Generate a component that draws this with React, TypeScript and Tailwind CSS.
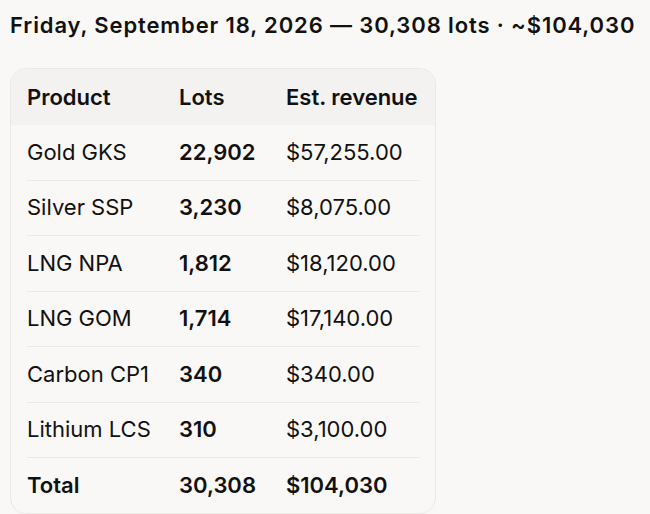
const rows = [
  { product: "Gold GKS", lots: "22,902", revenue: "$57,255.00" },
  { product: "Silver SSP", lots: "3,230", revenue: "$8,075.00" },
  { product: "LNG NPA", lots: "1,812", revenue: "$18,120.00" },
  { product: "LNG GOM", lots: "1,714", revenue: "$17,140.00" },
  { product: "Carbon CP1", lots: "340", revenue: "$340.00" },
  { product: "Lithium LCS", lots: "310", revenue: "$3,100.00" },
];

export default function App() {
  return (
    <div className="min-h-[514px] w-[650px] bg-[#f9f8f6] text-[#111111] font-['Inter',sans-serif]">
      <h1 className="pl-[10px] pt-[10px] text-[22px] leading-[30px] font-semibold tracking-[0.88px]">
        Friday, September 18, 2026 — 30,308 lots · ~$104,030
      </h1>
      <div className="ml-[10px] mt-[28px] w-[426px] overflow-hidden rounded-[16px] border border-[#ebe9e6] bg-[#f9f8f6] text-[22px]">
        <div className="grid h-[56px] grid-cols-[152px_107px_1fr] items-center bg-[#f3f2f0] px-[16px] font-semibold">
          <div>Product</div>
          <div>Lots</div>
          <div>Est. revenue</div>
        </div>
        <div className="px-[16px]">
          {rows.map((r) => (
            <div
              key={r.product}
              className="grid h-[55.5px] grid-cols-[152px_107px_1fr] items-center border-b border-[#ebe9e6]"
            >
              <div>{r.product}</div>
              <div className="font-semibold">{r.lots}</div>
              <div>{r.revenue}</div>
            </div>
          ))}
          <div className="grid h-[55px] grid-cols-[152px_107px_1fr] items-center font-semibold">
            <div>Total</div>
            <div>30,308</div>
            <div>$104,030</div>
          </div>
        </div>
      </div>
    </div>
  );
}
